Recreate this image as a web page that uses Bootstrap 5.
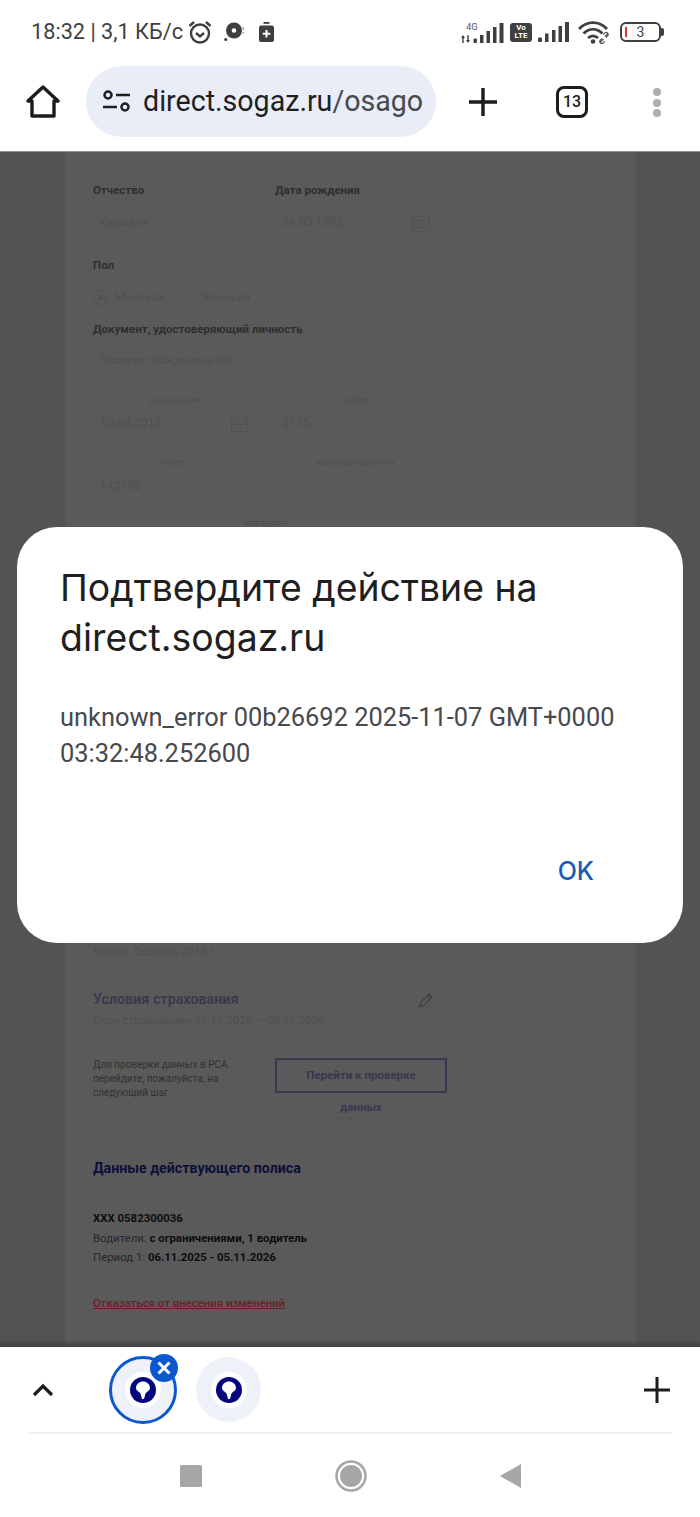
<!DOCTYPE html>
<html lang="ru">
  <head>
    <meta charset="UTF-8" />
    <title>direct.sogaz.ru</title>
    <link href="https://cdn.jsdelivr.net/npm/bootstrap@5.3.0/dist/css/bootstrap.min.css" rel="stylesheet" />
    <style>
      html, body { height: 1517px; overflow: hidden; }
      body { font-family: Roboto, "Liberation Sans", sans-serif; background: #fff; position: relative; }

      /* status bar */
      .status-row { height: 60px; padding: 16px 36px 0 31px; color: #3f3f3f; font-size: 21.7px; line-height: 32px; }
      .status-side { height: 32px; }
      .ico-alarm { margin-left: 5px; }
      .ico-disc { margin-left: 12px; }
      .ico-saver { margin-left: 15px; }
      .volte { width: 22px; height: 19px; margin-left: 6px; background: #3f3f3f; border-radius: 3px; color: #fff; font-size: 8px; line-height: 8px; font-weight: 700; }
      .ico-bars { margin-left: 6px; }
      .ico-wifi { margin-left: 9px; }
      .batt { width: 41px; height: 20px; margin-left: 10px; border: 2px solid #3f3f3f; border-radius: 6px; font-size: 14px; line-height: 14px; position: relative; }
      .batt i { position: absolute; left: 3px; top: 3px; width: 1.5px; height: 10px; background: #d33; }
      .batt-nib { width: 3px; height: 8px; background: #3f3f3f; border-radius: 0 2px 2px 0; }

      /* toolbar */
      .tool-row { height: 92px; padding-top: 6px; border-bottom: 1px solid #8c8c8c; }
      .home-slot { width: 86px; height: 71px; }
      .url-pill { width: 350px; height: 71px; background: #e8edf7; border-radius: 36px; padding-left: 16px; font-size: 28.6px; color: #1f1f1f; }
      .url-text { margin-left: 11px; }
      .url-tail { color: #47494c; }
      .plus-slot { width: 94px; height: 71px; }
      .tab-count { width: 32px; height: 32px; border: 3px solid #1c1c1c; border-radius: 8px; font-size: 16px; font-weight: 500; color: #1c1c1c; margin: 20px 0 0 26px; }
      .dots { margin: 22px 0 0 65px; gap: 2.7px; }
      .dots i { width: 8px; height: 8px; border-radius: 50%; background: #aeaeae; display: block; }

      /* dimmed page */
      .web-area { height: 1195px; background: #535353; overflow: hidden; position: relative; }
      .web-area::after { content: ""; position: absolute; left: 0; right: 0; bottom: 0; height: 8px; background: linear-gradient(rgba(60,60,60,0), rgba(60,60,60,.8)); }
      .web-sheet { width: 571px; margin-left: 65px; height: 100%; background: #5a5a5a; padding: 0 17px; font-size: 11.5px; }
      .form-box { width: 364px; padding: 31px 8px 0 10px; border: 1px solid #585858; border-top: 0; color: #505050; }
      .col-a { width: 182px; }
      .col-b { width: 162px; }
      .lbl { color: #2e2e2e; font-weight: 700; font-size: 11.5px; line-height: 14px; }
      .field { height: 27px; width: 162px; border: 1px solid #585858; padding: 0 6px; font-size: 11.5px; }
      .field-wide { width: 344px; }
      .field-short { height: 26px; }
      .num { font-size: 12.2px; }
      .cap { color: #4e4e4e; font-size: 7.1px; line-height: 12px; text-transform: uppercase; text-align: center; }
      .col-a .cap { width: 162px; }
      .mt-12 { margin-top: 12px; }
      .sec-pol { margin-top: 22px; }
      .sec-radio { margin-top: 17px; line-height: 16px; }
      .sec-doc { margin-top: 17px; }
      .sec-passport { margin-top: 11px; }
      .sec-cap { margin-top: 21px; }
      .sec-field { margin-top: 3px; }
      .sec-field-b { margin-top: 4px; }
      .sec-issued { margin-top: 19px; }
      .radio-dot { width: 15px; height: 15px; border: 1px solid #515151; border-radius: 50%; margin-right: 7px; }
      .radio-dot i { width: 5px; height: 5px; border-radius: 50%; background: #505050; display: block; }
      .radio-off { border-color: #585858; margin-left: 15px; }
      .behind-dialog { height: 410px; }
      .car-line { height: 30px; padding-top: 3px; line-height: 16px; }
      .terms-box { width: 364px; height: 62px; margin-top: 6px; padding: 12px 10px 0; border: 1px solid #585858; color: #505050; font-size: 11.5px; line-height: 16px; }
      .terms-title { color: #3a3a4a; font-size: 14.3px; font-weight: 700; line-height: 18px; margin-bottom: 4px; }
      .ico-pencil { margin: 2px 1px 0 0; }
      .check-row { width: 365px; height: 42px; margin-top: 19px; }
      .check-note { width: 182px; padding-left: 11px; color: #323232; font-size: 10px; line-height: 14px; }
      .check-go { width: 172px; height: 35px; border: 2px solid #383850; color: #383850; font-size: 11.5px; font-weight: 700; }
      .check-tail { color: #383850; font-size: 11.5px; font-weight: 700; line-height: 14px; width: 172px; text-align: center; margin-left: 193px; }
      .web-rule { border-top: 1px solid #565656; margin-top: 4px; }
      .policy-box { border: 1px solid #565656; height: 175px; margin-top: 29px; padding: 0 10px; }
      .policy-title { color: #0e0e3a; font-size: 14.2px; font-weight: 700; height: 41px; line-height: 38px; border-bottom: 1px solid #565656; }
      .policy-lines { height: 92px; padding-top: 19px; font-size: 11.4px; line-height: 19.5px; color: #272727; border-bottom: 1px solid #565656; }
      .policy-lines b { color: #0d0d0d; font-weight: 700; }
      .policy-link { color: #6a1f2a; font-size: 11.4px; font-weight: 500; text-decoration: underline; display: block; margin-top: 14px; line-height: 14px; }

      /* dialog */
      .site-dialog { position: absolute; left: 17px; top: 527px; width: 666px; height: 416px; background: #fff; border-radius: 40px; padding: 36px 43px 0; }
      .dlg-title { font-family: Inter, Roboto, sans-serif; font-size: 37.4px; line-height: 49.5px; color: #1f1f1f; font-weight: 400; margin: 0; }
      .dlg-body { font-size: 25.4px; line-height: 36px; color: #47494c; margin-top: 37px; }
      .dlg-ok { position: absolute; right: 89px; top: 326px; font-family: Inter, Roboto, sans-serif; font-size: 25px; font-weight: 500; line-height: 36px; color: #1a5bb5; }

      /* tab strip and nav */
      .tab-strip { height: 85px; }
      .chev { margin-left: 32px; }
      .tab-bubble { width: 65px; height: 65px; border-radius: 50%; background: #eef2f8; }
      .tab-two { margin-left: 19px; }
      .tab-active { width: 68px; height: 68px; margin-left: 55px; border: 3px solid #0b57d0; position: relative; }
      .site-ico { width: 36px; height: 36px; border-radius: 50%; background: #fff; }
      .tab-close { position: absolute; top: -5px; right: -4px; width: 28px; height: 28px; border-radius: 50%; background: #0b57d0; }
      .strip-plus { margin-left: auto; margin-right: 30px; }
      .strip-rule { border-top: 2px solid #f1f1f1; margin: 0 28px; }
      .nav-row { height: 83px; gap: 133px; }
    </style>
  </head>
  <body>
    <div class="status-row d-flex justify-content-between">
      <div class="status-side d-flex align-items-center">
        <span>18:32 | 3,1 КБ/с</span>
        <svg class="ico-alarm" width="24" height="24" viewBox="0 0 24 24" fill="none" stroke="#3f3f3f" stroke-width="2.400"><circle cx="12" cy="13.500" r="9"/><path d="M8 13l4 3.500L16 13M1.500 6l4.500-4M22.500 6L18 2"/></svg>
        <svg class="ico-disc" width="20" height="20" viewBox="0 0 20 20"><circle cx="10" cy="8.500" r="8" fill="#3f3f3f"/><circle cx="10" cy="8.500" r="2.300" fill="#fff"/><circle cx="1.800" cy="17.500" r="1.600" fill="#3f3f3f"/><rect x="18.500" y="5" width="1.200" height="3" fill="#8a8a8a"/><rect x="18.500" y="10" width="1.200" height="1.500" fill="#8a8a8a"/></svg>
        <svg class="ico-saver" width="15" height="20" viewBox="0 0 15 20"><rect x="4.500" y="0" width="6" height="1.800" fill="#3f3f3f"/><rect x="0" y="3.500" width="15" height="16.500" rx="2" fill="#3f3f3f"/><path d="M7.500 8v7.500M3.700 11.700h7.600" stroke="#fff" stroke-width="2"/></svg>
      </div>
      <div class="status-side d-flex align-items-center">
        <svg width="43" height="21" viewBox="0 0 43 21" fill="#3f3f3f"><text x="5" y="8" font-size="9.500" fill="#5a5a5a" font-family="Roboto">4G</text><path d="M0 16l2-3 2 3h-1.300v5H1.300v-5zM5 18l2 3 2-3H7.700v-5H6.300v5z"/><rect x="12.500" y="16.500" width="3.500" height="4.500" rx="1"/><rect x="19" y="13" width="3.500" height="8"/><rect x="25.500" y="9" width="3.500" height="12"/><rect x="32" y="5" width="3.500" height="16"/><rect x="38.500" y="1" width="4" height="20"/></svg>
        <span class="volte d-flex flex-column align-items-center justify-content-center"><span>Vo</span><span>LTE</span></span>
        <svg class="ico-bars" width="31" height="20" viewBox="0 0 31 20" fill="#3f3f3f"><rect x="0" y="15.500" width="4" height="4.500" rx="1"/><rect x="7" y="11.500" width="3.500" height="8.500"/><rect x="14" y="8" width="3.500" height="12"/><rect x="20.500" y="4" width="3.500" height="16"/><rect x="27" y="0" width="4" height="20"/></svg>
        <svg class="ico-wifi" width="32" height="23" viewBox="0 0 32 23" fill="none" stroke="#3f3f3f" stroke-width="2.800"><path d="M1 8c8-8.500 20-8.500 28 0M5.500 12.500c6-5.500 13-5.500 19 0M10 17c3.500-3 6.500-3 10 0"/><circle cx="15" cy="20.500" r="2.300" fill="#3f3f3f" stroke="none"/><path d="M22.500 21l3-3M27 15.500l3-3M24 17.500l-1.800 1.800a2 2 0 0 0 2.800 2.800l1.800-1.800M28 16.500l1.800-1.800a2 2 0 0 0-2.800-2.800l-1.800 1.800" stroke="#555" stroke-width="1.200"/></svg>
        <span class="batt d-flex align-items-center justify-content-center">3<i></i></span>
        <i class="batt-nib"></i>
      </div>
    </div>

    <div class="tool-row d-flex align-items-start">
      <div class="home-slot d-flex justify-content-center align-items-center">
        <svg width="34" height="34" viewBox="0 0 34 34" fill="none" stroke="#1c1c1c" stroke-width="3.400" stroke-linejoin="round"><path d="M2 16L17 2l15 14h-4v15H6V16z"/></svg>
      </div>
      <div class="url-pill d-flex align-items-center">
        <svg width="30" height="24" viewBox="0 0 30 24" fill="none" stroke="#1f1f1f" stroke-width="2.500"><circle cx="6" cy="5" r="3.500"/><path d="M14 5h14M1 17h14"/><circle cx="23" cy="17" r="3.500"/></svg>
        <span class="url-text"><span>direct.sogaz.ru</span><span class="url-tail">/osago</span></span>
      </div>
      <div class="plus-slot d-flex justify-content-center align-items-center">
        <svg width="30" height="30" viewBox="0 0 30 30" stroke="#1c1c1c" stroke-width="3.400"><path d="M15 1v28M1 15h28"/></svg>
      </div>
      <div class="tab-count d-flex align-items-center justify-content-center">13</div>
      <div class="dots d-flex flex-column"><i></i><i></i><i></i></div>
    </div>

    <div class="web-area">
      <div class="web-sheet">
        <div class="form-box">
          <div class="d-flex">
            <div class="col-a">
              <div class="lbl">Отчество</div>
              <div class="field d-flex align-items-center mt-12">Юрьевич</div>
            </div>
            <div class="col-b">
              <div class="lbl">Дата рождения</div>
              <div class="field num d-flex align-items-center justify-content-between mt-12">26.03.1992
                <svg width="18" height="18" viewBox="0 0 18 18" fill="none" stroke="#525252"><rect x=".5" y="2.500" width="17" height="15"/><path d="M.5 6.500h17M3 10h12M3 13.500h12" stroke-dasharray="2 1.500"/></svg>
              </div>
            </div>
          </div>
          <div class="lbl sec-pol">Пол</div>
          <div class="sec-radio d-flex align-items-center">
            <span class="radio-dot d-flex align-items-center justify-content-center"><i></i></span>
            <span>Мужской</span>
            <span class="radio-dot radio-off"></span>
            <span>Женский</span>
          </div>
          <div class="lbl sec-doc">Документ, удостоверяющий личность</div>
          <div class="field field-wide d-flex align-items-center sec-passport">Паспорт гражданина РФ</div>
          <div class="d-flex sec-cap">
            <div class="col-a">
              <div class="cap">дата выдачи</div>
              <div class="field field-short num d-flex align-items-center justify-content-between sec-field">10.08.2015
                <svg width="17" height="17" viewBox="0 0 18 18" fill="none" stroke="#525252"><rect x=".5" y="2.500" width="17" height="15"/><path d="M.5 6.500h17M3 10h12M3 13.500h12" stroke-dasharray="2 1.500"/></svg>
              </div>
            </div>
            <div class="col-b">
              <div class="cap">серия</div>
              <div class="field field-short num d-flex align-items-center sec-field">0115</div>
            </div>
          </div>
          <div class="d-flex sec-cap">
            <div class="col-a">
              <div class="cap">номер</div>
              <div class="field field-short num d-flex align-items-center sec-field-b">142798</div>
            </div>
            <div class="col-b">
              <div class="cap">код подразделения</div>
              <div class="field field-short sec-field-b"></div>
            </div>
          </div>
          <div class="cap sec-issued">кем выдан</div>
          <div class="behind-dialog"></div>
          <div class="car-line">Nissan, Qashqai, 2018 г.</div>
        </div>

        <div class="terms-box d-flex justify-content-between">
          <div>
            <div class="terms-title">Условия страхования</div>
            <div>Срок страхования 06.11.2025 — 05.11.2026</div>
          </div>
          <svg class="ico-pencil" width="16" height="16" viewBox="0 0 16 16" fill="none" stroke="#3f3f4a" stroke-width="1.300"><path d="M1.500 14.500l1-4 8.500-8.500 3 3-8.500 8.500zM9.500 3.500l3 3"/></svg>
        </div>
        <div class="check-row d-flex justify-content-between align-items-start">
          <div class="check-note">Для проверки данных в РСА перейдите, пожалуйста, на следующий шаг</div>
          <div class="check-go d-flex align-items-center justify-content-center">Перейти к проверке</div>
        </div>
        <div class="check-tail">данных</div>
        <div class="web-rule"></div>
        <div class="policy-box">
          <div class="policy-title">Данные действующего полиса</div>
          <div class="policy-lines">
            <div><b>XXX 0582300036</b></div>
            <div>Водители: <b>с ограничениями, 1 водитель</b></div>
            <div>Период 1: <b>06.11.2025 - 05.11.2026</b></div>
          </div>
          <a class="policy-link" href="#">Отказаться от внесения изменений</a>
        </div>
      </div>
    </div>

    <div class="site-dialog">
      <h1 class="dlg-title">Подтвердите действие на direct.sogaz.ru</h1>
      <div class="dlg-body">unknown_error 00b26692 2025-11-07 GMT+0000 03:32:48.252600</div>
      <div class="dlg-ok">OK</div>
    </div>

    <div class="tab-strip d-flex align-items-center">
      <svg class="chev" width="22" height="14" viewBox="0 0 22 14" fill="none" stroke="#1c1c1c" stroke-width="3.200"><path d="M2 12l9-9 9 9"/></svg>
      <div class="tab-bubble tab-active d-flex align-items-center justify-content-center">
        <div class="site-ico d-flex align-items-center justify-content-center">
          <svg width="26" height="26" viewBox="0 0 26 26"><circle cx="13" cy="13" r="13" fill="#05057e"/><path d="M6 11c0-4 3.500-6.500 7-6.500s7 2.500 7 6.500c0 2.500-3 3.500-4.500 5.500L14 22h-2l-1.500-5.500C9 14.500 6 13.500 6 11z" fill="#fff"/></svg>
        </div>
        <div class="tab-close d-flex align-items-center justify-content-center">
          <svg width="14" height="14" viewBox="0 0 14 14" stroke="#fff" stroke-width="3"><path d="M1.500 1.500l11 11M12.500 1.500l-11 11"/></svg>
        </div>
      </div>
      <div class="tab-bubble tab-two d-flex align-items-center justify-content-center">
        <div class="site-ico d-flex align-items-center justify-content-center">
          <svg width="26" height="26" viewBox="0 0 26 26"><circle cx="13" cy="13" r="13" fill="#05057e"/><path d="M6 11c0-4 3.500-6.500 7-6.500s7 2.500 7 6.500c0 2.500-3 3.500-4.500 5.500L14 22h-2l-1.500-5.500C9 14.500 6 13.500 6 11z" fill="#fff"/></svg>
        </div>
      </div>
      <svg class="strip-plus" width="26" height="26" viewBox="0 0 26 26" stroke="#1c1c1c" stroke-width="3"><path d="M13 0v26M0 13h26"/></svg>
    </div>
    <div class="strip-rule"></div>
    <div class="nav-row d-flex align-items-center justify-content-center">
      <svg width="22" height="22" viewBox="0 0 22 22"><rect width="22" height="22" rx="1.500" fill="#a6a6a6"/></svg>
      <svg width="32" height="32" viewBox="0 0 32 32"><circle cx="16" cy="16" r="14.500" fill="none" stroke="#a6a6a6" stroke-width="2.500"/><circle cx="16" cy="16" r="11" fill="#a6a6a6"/></svg>
      <svg width="21" height="24" viewBox="0 0 21 24"><path d="M21 0v24L0 12z" fill="#a6a6a6"/></svg>
    </div>
  </body>
</html>
